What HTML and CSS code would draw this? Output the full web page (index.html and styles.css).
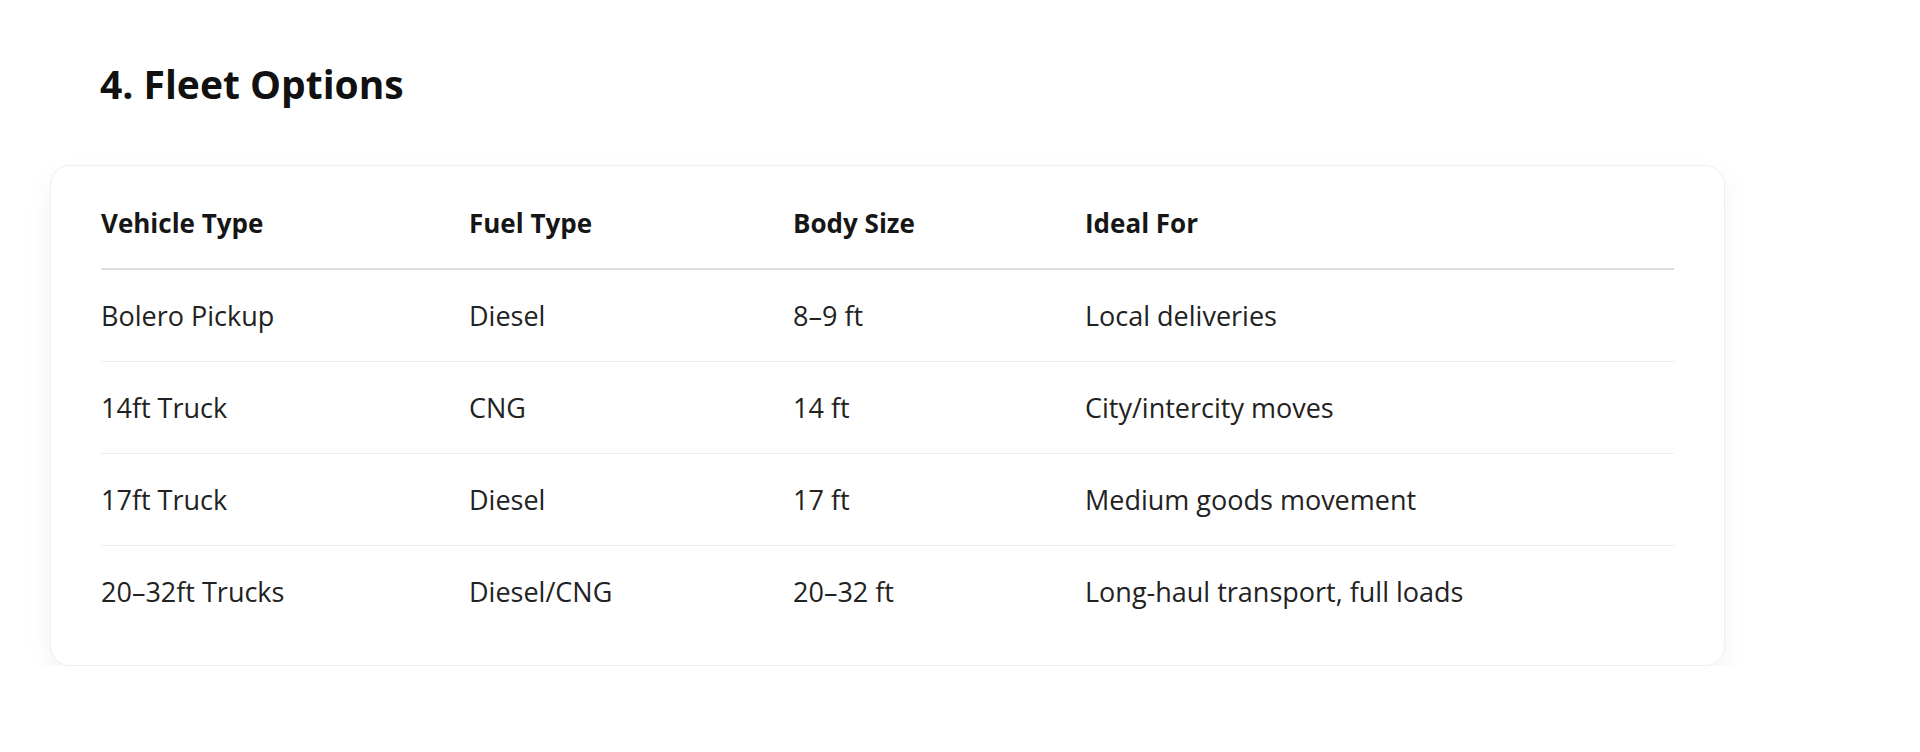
FILE: index.html
```html
<!DOCTYPE html>
<html lang="en">
<head>
<meta charset="utf-8">
<title>Fleet Options</title>
<link rel="stylesheet" href="styles.css">
</head>
<body>
<section class="fleet">
  <h2 class="fleet-title">4. Fleet Options</h2>
  <div class="card">
    <table class="fleet-table">
      <colgroup>
        <col class="c1"><col class="c2"><col class="c3"><col class="c4">
      </colgroup>
      <thead>
        <tr><th>Vehicle Type</th><th>Fuel Type</th><th>Body Size</th><th>Ideal For</th></tr>
      </thead>
      <tbody>
        <tr><td>Bolero Pickup</td><td>Diesel</td><td>8–9 ft</td><td>Local deliveries</td></tr>
        <tr><td>14ft Truck</td><td>CNG</td><td>14 ft</td><td>City/intercity moves</td></tr>
        <tr><td>17ft Truck</td><td>Diesel</td><td>17 ft</td><td>Medium goods movement</td></tr>
        <tr><td>20–32ft Trucks</td><td>Diesel/CNG</td><td>20–32 ft</td><td>Long-haul transport, full loads</td></tr>
      </tbody>
    </table>
  </div>
</section>
</body>
</html>
```
FILE: styles.css
```css
html, body {
  margin: 0;
  padding: 0;
  background: #ffffff;
}
body {
  font-family: "Open Sans", "Noto Sans", sans-serif;
  color: #1c1c1c;
}
.fleet {
  width: 1675px;
  margin-left: 50px;
  padding-top: 58px;
}
.fleet-title {
  margin: 0 0 55px 50px;
  font-size: 39px;
  line-height: 52px;
  font-weight: 700;
  color: #111;
}
.card {
  background: #fff;
  border: 1px solid #efefef;
  border-radius: 20px;
  box-shadow: 0 12px 30px rgba(0, 0, 0, 0.05);
  padding: 11px 50px 28px;
}
.fleet-table {
  width: 100%;
  border-collapse: collapse;
  table-layout: fixed;
}
.c1 { width: 368px; }
.c2 { width: 324px; }
.c3 { width: 292px; }
.fleet-table th,
.fleet-table td {
  text-align: left;
  padding: 0;
  height: 91px;
  line-height: 32px;
  vertical-align: middle;
}
.fleet-table th {
  font-size: 26px;
  font-weight: 700;
  color: #161616;
  border-bottom: 2px solid #dcdcdc;
}
.fleet-table td {
  font-size: 27px;
  font-weight: 400;
  color: #222;
}
.fleet-table tbody tr + tr td {
  border-top: 1px solid #eeeeee;
}
```
